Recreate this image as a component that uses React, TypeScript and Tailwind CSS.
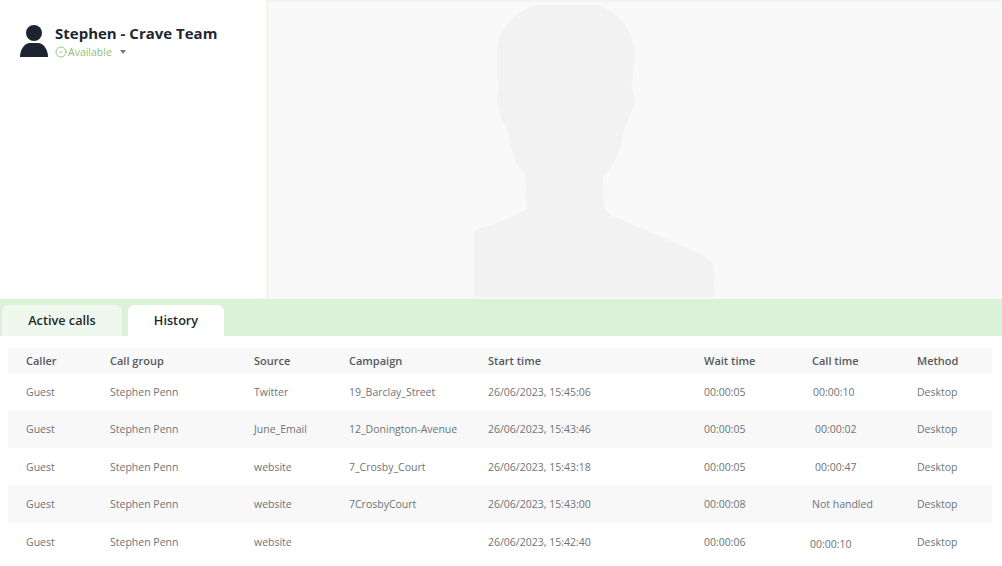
import { CircleCheck } from 'lucide-react';

const columns = ['Caller', 'Call group', 'Source', 'Campaign', 'Start time', 'Wait time', 'Call time', 'Method'];

const rows = [
  { group: 'Stephen Penn', source: 'Twitter', campaign: '19_Barclay_Street', start: '26/06/2023, 15:45:06', wait: '00:00:05', call: '00:00:10', callClass: 'pl-px', rowClass: 'h-[36px]' },
  { group: 'Stephen Penn', source: 'June_Email', campaign: '12_Donington-Avenue', start: '26/06/2023, 15:43:46', wait: '00:00:05', call: '00:00:02', callClass: 'pl-[3px]', rowClass: 'h-[38px] bg-[#f8f8f8]' },
  { group: 'Stephen Penn', source: 'website', campaign: '7_Crosby_Court', start: '26/06/2023, 15:43:18', wait: '00:00:05', call: '00:00:47', callClass: 'pl-[3px]', rowClass: 'h-[37px]' },
  { group: 'Stephen Penn', source: 'website', campaign: '7CrosbyCourt', start: '26/06/2023, 15:43:00', wait: '00:00:08', call: 'Not handled', callClass: '', rowClass: 'h-[38px] bg-[#f8f8f8]' },
  { group: 'Stephen Penn', source: 'website', campaign: '', start: '26/06/2023, 15:42:40', wait: '00:00:06', call: '00:00:10', callClass: '-ml-0.5 pt-1', rowClass: 'h-[38px]' },
];

const gridCols = 'grid grid-cols-[84px_144px_95px_139px_216px_108px_105px_1fr] items-center pl-[18px]';

function Silhouette() {
  return (
    <svg viewBox="269 2 733 297" className="w-full h-full block">
      <path
        fill="#f2f2f2"
        d="M537 5 L597 5 C618 12 634 30 634 52 L633 78 L631 85 L634 97 C634 108 630 118 625 125 L622 140 C620 155 612 168 603 176 L604 208 L612 216 L650 232 L700 254 L713 263 L715 297 L474 297 L474 231 L510 218 L527 209 L525 174 C515 166 511 150 508 130 C502 122 497 110 497 97 L499 85 L497 78 L497 48 C499 28 516 11 537 5 Z"
      />
    </svg>
  );
}

function Avatar() {
  return (
    <svg viewBox="0 0 28 32" className="w-7 h-8 block text-[#1b2430]" fill="currentColor">
      <circle cx="14" cy="8" r="8" />
      <path d="M0 32 C0 24 5 18 10 18 L18 18 C23 18 28 24 28 32 Z" />
    </svg>
  );
}

export default function App() {
  return (
    <div className="w-[1002px] h-[566px] overflow-hidden bg-white font-['Open_Sans',sans-serif]">
      <div className="flex h-[299px]">
        <div className="w-[266px] shrink-0 flex items-start gap-[7px] pl-5 pt-[25px]">
          <Avatar />
          <div>
            <div className="text-[15px] leading-4 font-bold text-[#22272e]">Stephen - Crave Team</div>
            <div className="flex items-center mt-[3px] text-[10.5px] leading-4 text-[#8fbe79]">
              <CircleCheck className="w-3 h-3 mr-px" strokeWidth={1.75} />
              <span>Available</span>
              <span className="ml-2 w-0 h-0 border-x-[3.5px] border-x-transparent border-t-4 border-t-[#75797c]" />
            </div>
          </div>
        </div>
        <div className="flex-1 bg-[#f9f9f9] border-l-[3px] border-t-2 border-[#eff7ef] overflow-hidden">
          <Silhouette />
        </div>
      </div>

      <div className="h-[37px] bg-[#dbf1d8] flex items-end gap-[6px] pl-0.5">
        <div className="w-[120px] h-[31px] rounded-t-md bg-[#eef8ec] flex items-center justify-center text-[12.7px] font-semibold text-[#22272e]">
          Active calls
        </div>
        <div className="w-[96px] h-[31px] rounded-t-md bg-white flex items-center justify-center text-[12.7px] font-semibold text-[#22272e]">
          History
        </div>
      </div>

      <div className="mx-2 mt-3 w-[984px]">
        <div className={`${gridCols} h-[26px] bg-[#f8f8f8] text-[11px] font-semibold text-[#555a5e]`}>
          {columns.map((c) => (
            <div key={c}>{c}</div>
          ))}
        </div>
        {rows.map((r) => (
          <div key={r.start} className={`${gridCols} ${r.rowClass} pt-0.5 text-[10.5px] text-[#6f7377]`}>
            <div>Guest</div>
            <div>{r.group}</div>
            <div>{r.source}</div>
            <div>{r.campaign}</div>
            <div>{r.start}</div>
            <div>{r.wait}</div>
            <div className={r.callClass}>{r.call}</div>
            <div>Desktop</div>
          </div>
        ))}
      </div>
    </div>
  );
}
